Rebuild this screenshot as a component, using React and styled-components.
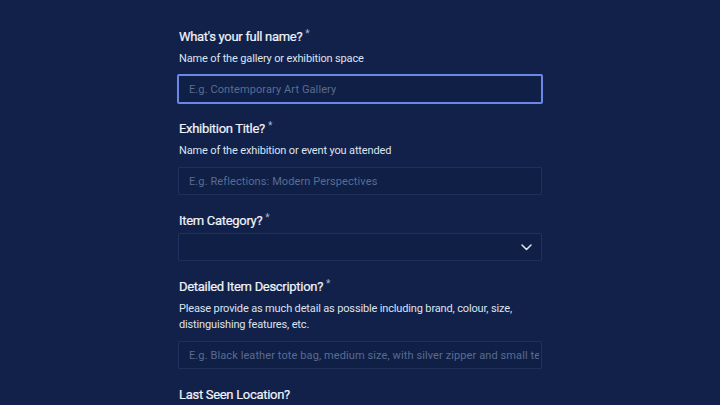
import React from 'react'
import styled, { createGlobalStyle } from 'styled-components'

const GlobalStyle = createGlobalStyle`
  html, body {
    margin: 0;
    padding: 0;
    background: #11214a;
  }
  body {
    font-family: Roboto, "Liberation Sans", sans-serif;
  }
`

const Page = styled.div`
  min-height: 405px;
  background: #11214a;
  padding-top: 27px;
  box-sizing: border-box;
`

const Form = styled.form`
  width: 364px;
  margin: 0 auto;
  display: flex;
  flex-direction: column;
  gap: 16px;
`

const Field = styled.div`
  display: flex;
  flex-direction: column;
`

const Label = styled.label`
  font-size: 13px;
  font-weight: 400;
  line-height: 20px;
  color: #f1f4fa;
  letter-spacing: -0.3px;
  margin-bottom: 2px;
  padding-left: 1px;
  -webkit-text-stroke: 0.2px #f1f4fa;
`

const Star = styled.span`
  font-size: 10px;
  color: #a9b5d2;
  vertical-align: top;
  margin-left: 3px;
  position: relative;
  top: -3px;
  -webkit-text-stroke: 0;
`

const Hint = styled.p`
  margin: 2px 0 8px;
  padding-left: 1px;
  font-size: 11px;
  line-height: 16px;
  color: #dde3ef;
  letter-spacing: -0.15px;
`

const Input = styled.input`
  box-sizing: border-box;
  height: 28px;
  width: 100%;
  padding: 0 2px 0 10px;
  background: #0f1f46;
  border: 1px solid ${(p) => (p.$focused ? '#6b88e8' : '#1f305b')};
  box-shadow: ${(p) => (p.$focused ? '0 0 0 1px #6b88e8' : 'none')};
  border-radius: 1px;
  font-family: Roboto, "Liberation Sans", sans-serif;
  font-size: 11px;
  letter-spacing: 0.1px;
  color: #e6eaf4;
  outline: none;
  &::placeholder {
    color: #5a6c92;
  }
`

const SelectBox = styled.div`
  box-sizing: border-box;
  height: 28px;
  display: flex;
  align-items: center;
  justify-content: flex-end;
  padding: 0 9px;
  background: #0f1f46;
  border: 1px solid #1f305b;
  border-radius: 1px;
`

const Chevron = () => (
  <svg width="11" height="7" viewBox="0 0 11 7" fill="none">
    <path d="M1 1l4.5 4.5L10 1" stroke="#dfe5f2" strokeWidth="1.5" strokeLinecap="round" strokeLinejoin="round" />
  </svg>
)

const App = () => {
  return (
    <Page>
      <GlobalStyle />
      <Form onSubmit={(e) => e.preventDefault()}>
        <Field>
          <Label>What's your full name?<Star>*</Star></Label>
          <Hint>Name of the gallery or exhibition space</Hint>
          <Input $focused placeholder="E.g. Contemporary Art Gallery" />
        </Field>
        <Field>
          <Label>Exhibition Title?<Star>*</Star></Label>
          <Hint>Name of the exhibition or event you attended</Hint>
          <Input placeholder="E.g. Reflections: Modern Perspectives" />
        </Field>
        <Field>
          <Label>Item Category?<Star>*</Star></Label>
          <SelectBox>
            <Chevron />
          </SelectBox>
        </Field>
        <Field>
          <Label>Detailed Item Description?<Star>*</Star></Label>
          <Hint>
            Please provide as much detail as possible including brand, colour, size,
            distinguishing features, etc.
          </Hint>
          <Input placeholder="E.g. Black leather tote bag, medium size, with silver zipper and small tear" />
        </Field>
        <Field>
          <Label>Last Seen Location?</Label>
        </Field>
      </Form>
    </Page>
  )
}

export default App
